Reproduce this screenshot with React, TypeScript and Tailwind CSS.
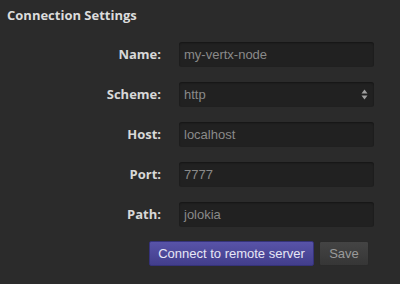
// Connection settings panel: labelled fields plus connect/save actions.

const fields = [
  { label: "Name:", value: "my-vertx-node" },
  { label: "Scheme:", value: "http", select: true },
  { label: "Host:", value: "localhost" },
  { label: "Port:", value: "7777" },
  { label: "Path:", value: "jolokia" },
];

function SelectArrows() {
  return (
    <svg width="7" height="11" viewBox="0 0 7 11" className="text-[#a0a0a0]">
      <path d="M3.5 0.5 L6.5 4.5 H0.5 Z" fill="currentColor" />
      <path d="M3.5 10.5 L6.5 6.5 H0.5 Z" fill="currentColor" />
    </svg>
  );
}

export default function App() {
  return (
    <div className="h-[284px] w-[400px] bg-[#2b2b2b] font-['Liberation_Sans',sans-serif] overflow-hidden">
      <h2 className="pl-[7px] pt-[6px] font-['Open_Sans',sans-serif] text-[13px] font-bold leading-[18px] text-[#dcdcdc]">
        Connection Settings
      </h2>

      <div className="mt-[18px] flex flex-col gap-[15px]">
        {fields.map((f) => (
          <div key={f.label} className="flex items-center">
            <label className="w-[161px] text-right font-['Open_Sans',sans-serif] text-[13px] font-bold text-[#d8d8d8]">
              {f.label}
            </label>
            <div className="ml-[18px] flex h-[25px] w-[195px] items-center justify-between rounded-[3px] bg-[#212121] pl-[5px] pr-[6px] text-[13px] text-[#8a8a8a] shadow-[inset_0_1px_2px_rgba(0,0,0,0.4)]">
              <span>{f.value}</span>
              {f.select && <SelectArrows />}
            </div>
          </div>
        ))}
      </div>

      <div className="mt-[14px] ml-[149px] flex gap-[5px]">
        <button
          type="button"
          className="h-[25px] w-[165px] rounded-[2px] border border-[#35327a] bg-gradient-to-b from-[#5853a8] to-[#423e8c] text-[13px] text-[#e6e6f5]"
        >
          Connect to remote server
        </button>
        <button
          type="button"
          className="h-[25px] w-[50px] rounded-[2px] border border-[#2a2a2a] bg-gradient-to-b from-[#444] to-[#363636] text-[13px] text-[#9a9a9a]"
        >
          Save
        </button>
      </div>
    </div>
  );
}
